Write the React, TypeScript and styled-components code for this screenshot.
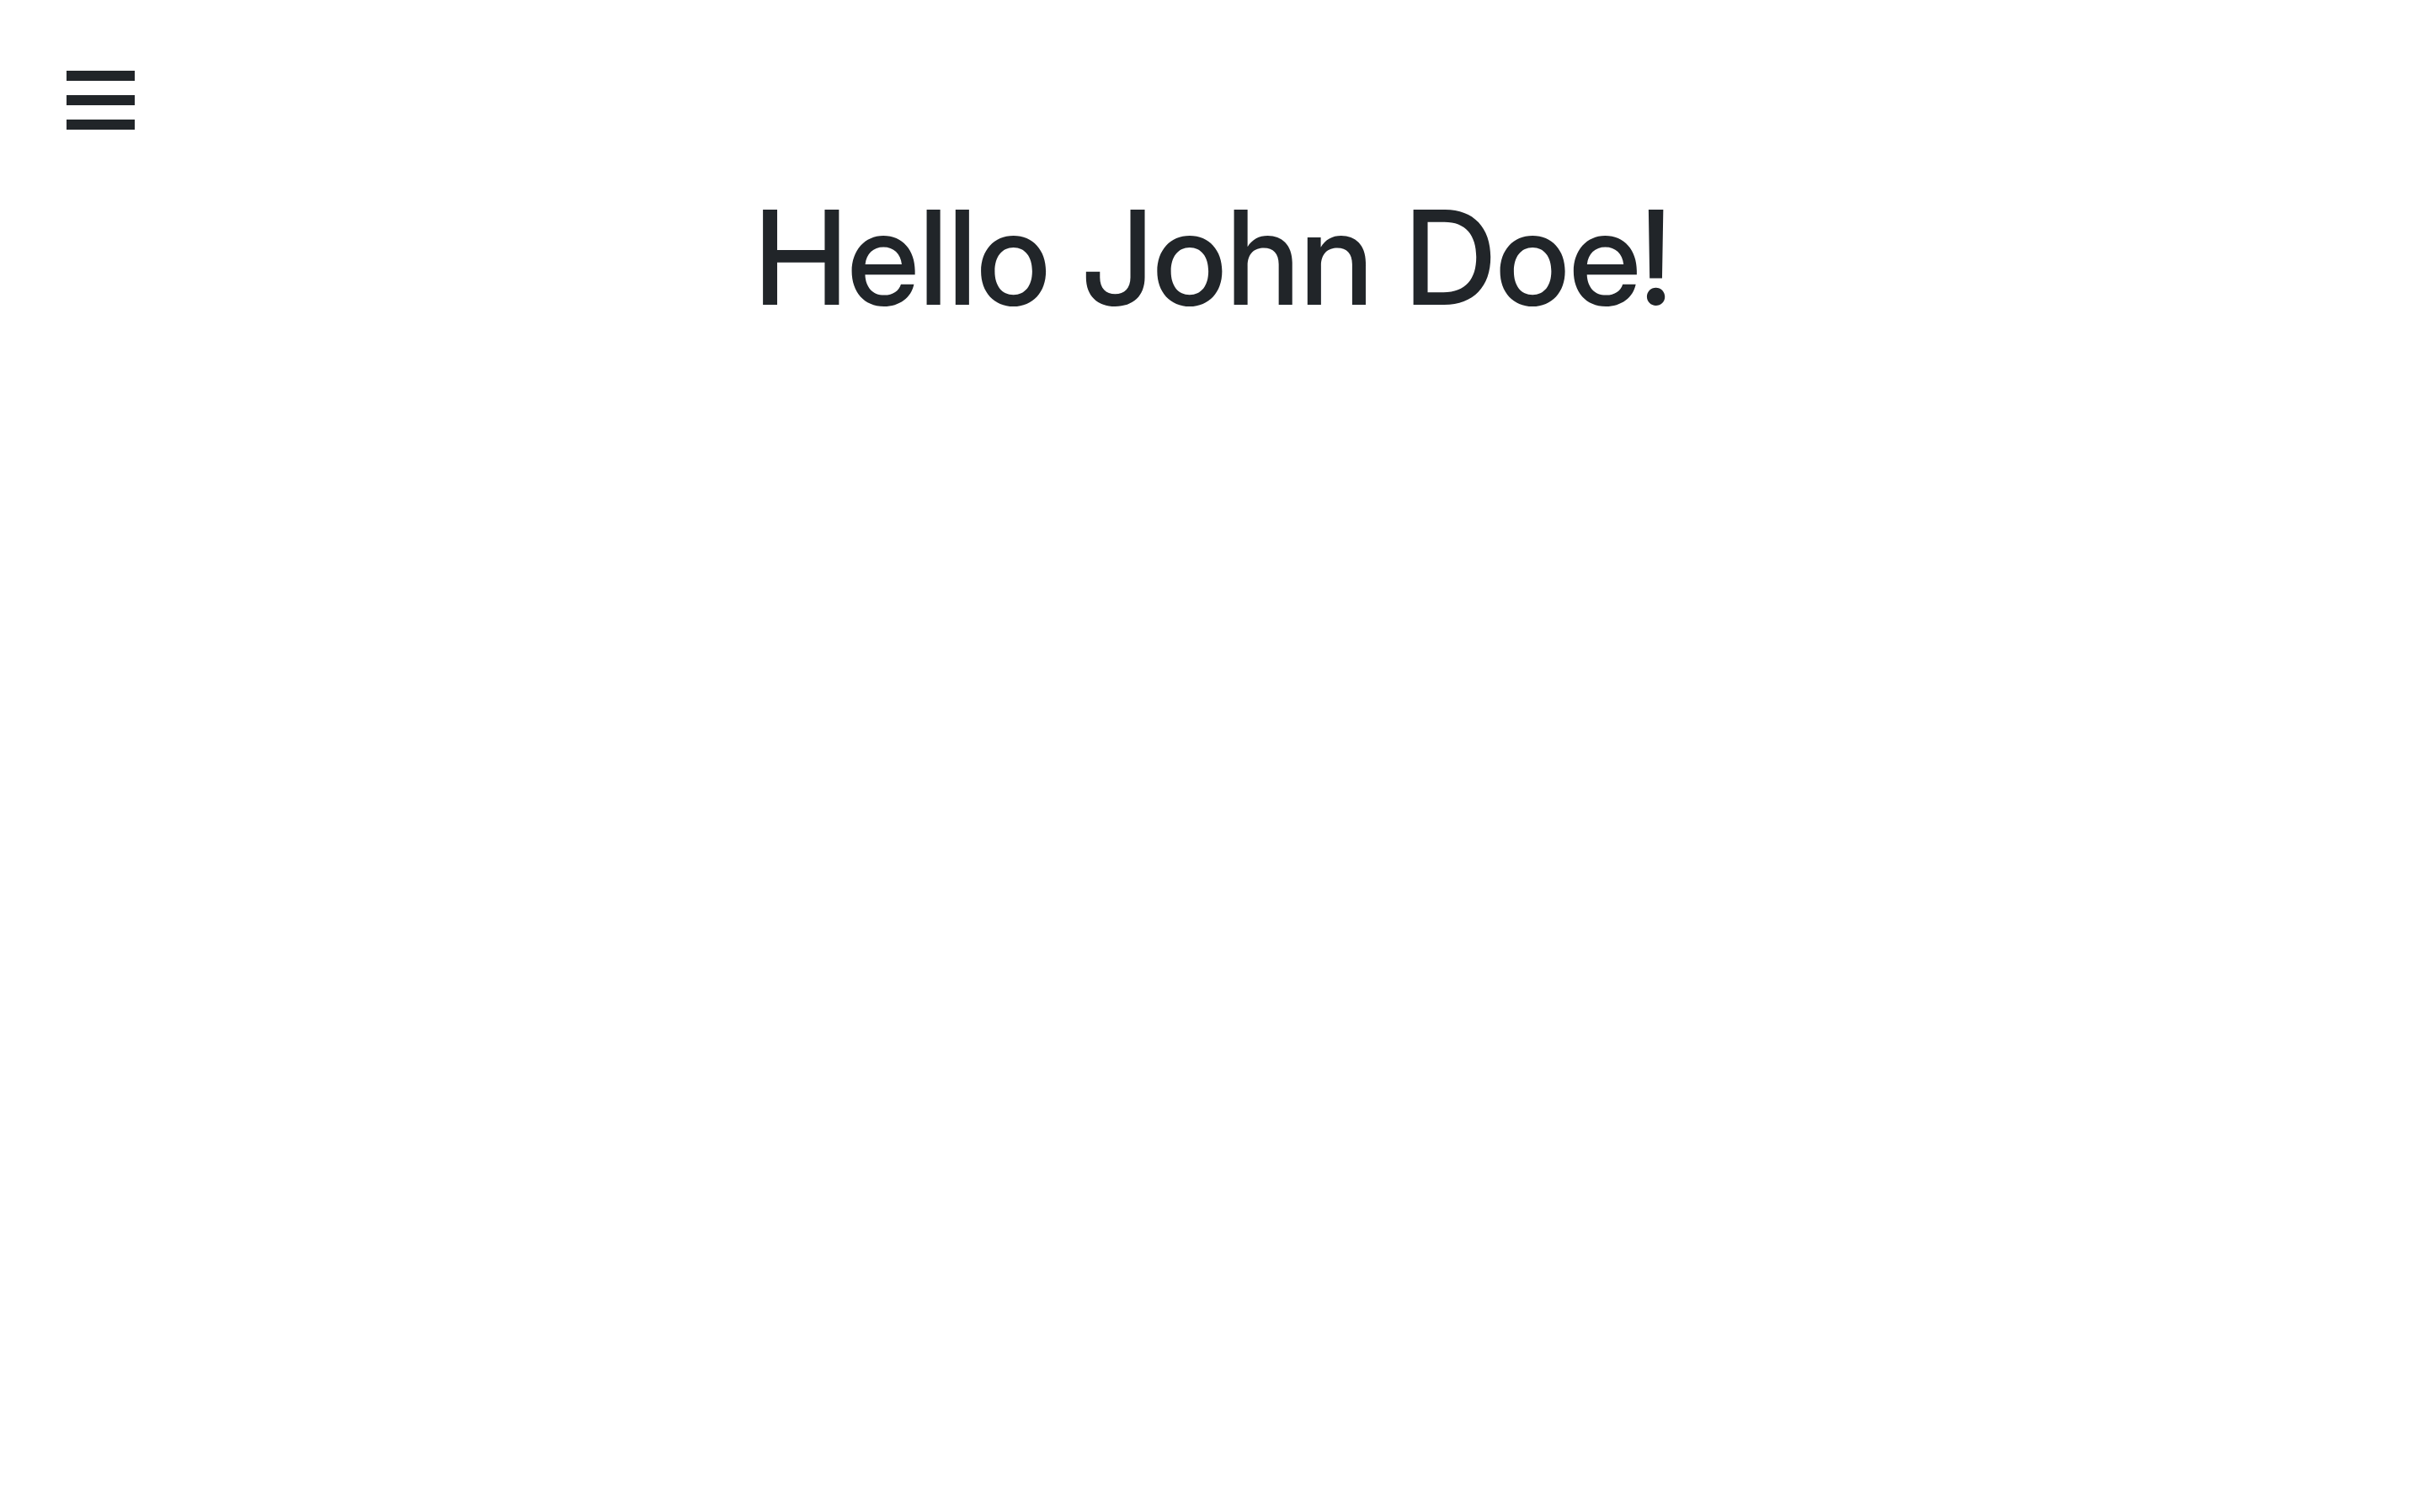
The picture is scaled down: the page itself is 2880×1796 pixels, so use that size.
import React from "react";
import styled, { createGlobalStyle } from "styled-components";

const GlobalStyle = createGlobalStyle`
  body {
    margin: 0;
    background: #fff;
    color: #212529;
    font-family: "Inter Display", Inter, "Liberation Sans", sans-serif;
  }
`;

const Header = styled.header`
  display: flex;
  padding: 84px 79px 0;
`;

const MenuButton = styled.button`
  display: flex;
  flex-direction: column;
  gap: 17px;
  width: 81px;
  padding: 0;
  border: 0;
  background: none;
  color: inherit;
  cursor: pointer;
`;

const Bar = styled.span`
  width: 100%;
  height: 12px;
  background: currentColor;
`;

const Title = styled.h1`
  margin: 56px 0 0;
  font-size: 156px;
  font-weight: 500;
  line-height: 192px;
  text-align: center;
`;

export default function App() {
  return (
    <>
      <GlobalStyle />
      <Header>
        <MenuButton type="button" aria-label="Open menu">
          <Bar />
          <Bar />
          <Bar />
        </MenuButton>
      </Header>
      <main>
        <Title>Hello John Doe!</Title>
      </main>
    </>
  );
}
